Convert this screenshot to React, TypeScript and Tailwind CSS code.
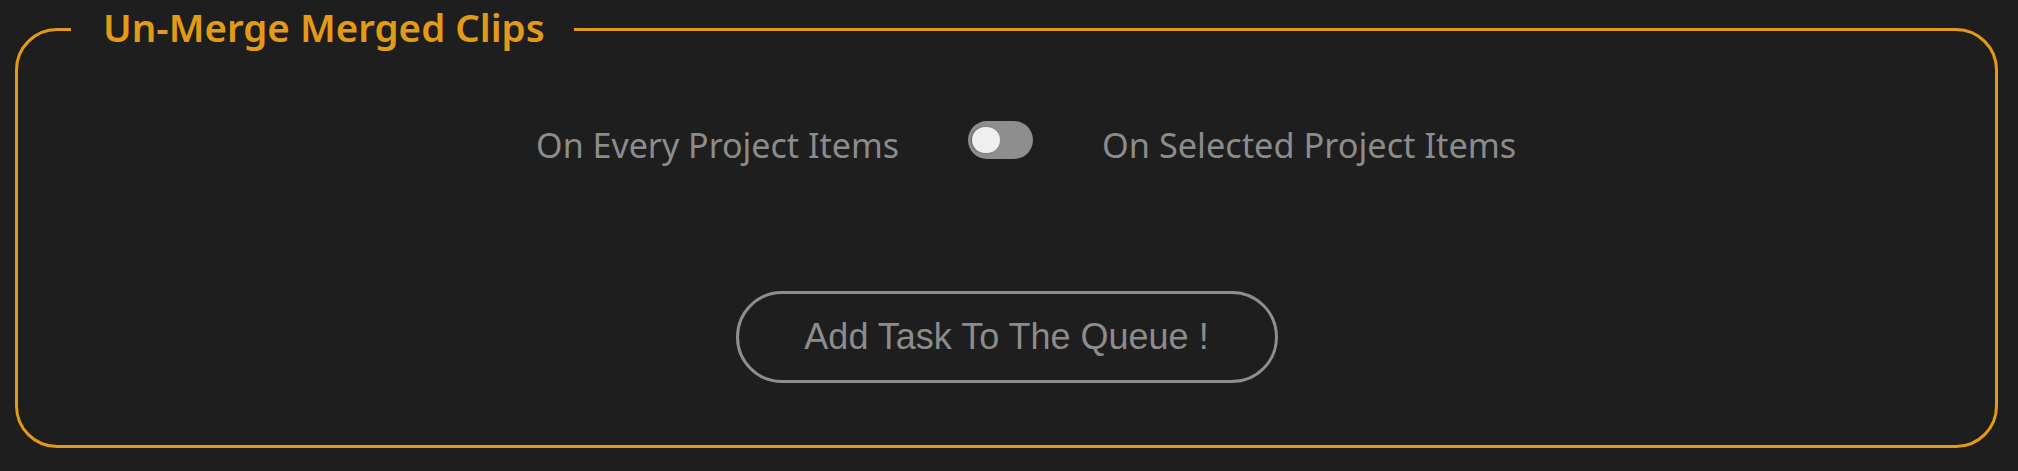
import { useState } from 'react';

export default function App() {
  const [selectedOnly, setSelectedOnly] = useState(false);

  return (
    <div className="w-full h-[471px] bg-[#1e1e1e] pl-[15px] pr-[20px] font-['Noto_Sans',sans-serif]">
      <fieldset className="h-[448px] border-[3px] border-[#e39b17] rounded-[42px] min-w-0">
        <legend className="ml-[53px] pl-[32px] pr-[29px] pb-[4px] text-[38.5px] leading-[54px] font-semibold text-[#e39b17]">
          Un-Merge Merged Clips
        </legend>

        <div className="flex flex-col items-center pt-[58px]">
          <div className="w-full grid grid-cols-[1fr_auto_1fr] items-center gap-x-[69px] pr-[12px]">
            <span className="justify-self-end pt-[10px] text-[34px] leading-[38px] text-[#8c8c8c]">
              On Every Project Items
            </span>
            <button
              type="button"
              onClick={() => setSelectedOnly(!selectedOnly)}
              className={`flex items-center w-[65px] h-[38px] rounded-full bg-[#8e8e8e] px-[4px] ${selectedOnly ? 'justify-end' : 'justify-start'}`}
            >
              <span className="block w-[28px] h-[26px] rounded-full bg-[#efefef] shadow-[-1px_0_2px_rgba(0,0,0,0.35)]" />
            </button>
            <span className="justify-self-start pt-[10px] text-[34.3px] leading-[38px] text-[#8c8c8c]">
              On Selected Project Items
            </span>
          </div>

          <button
            type="button"
            className="mt-[127px] w-[542px] h-[92px] rounded-full border-[3px] border-[#8e8e8e] flex items-center justify-center font-['Liberation_Sans',Arial,sans-serif] text-[36px] text-[#8c8c8c]"
          >
            Add Task To The Queue !
          </button>
        </div>
      </fieldset>
    </div>
  );
}
